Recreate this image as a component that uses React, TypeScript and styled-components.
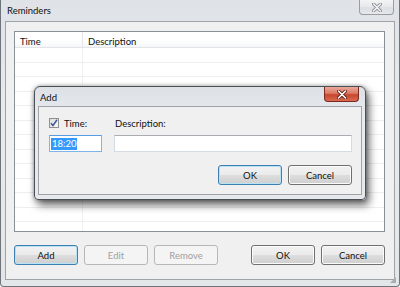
import React from "react";
import styled, { createGlobalStyle, css } from "styled-components";

const Global = createGlobalStyle`
  html, body { margin: 0; padding: 0; background: #ffffff; }
  body { font-family: "Lato", "Liberation Sans", sans-serif; font-size: 9.5px; color: #111111; }
  * { box-sizing: border-box; }
`;

const Window = styled.div`
  position: relative;
  width: 400px;
  height: 287px;
  display: flex;
  flex-direction: column;
  padding: 0 4px 6px 4px;
  border: 1px solid #6f747a;
  border-top: none;
  border-radius: 0 0 4px 4px;
  background: linear-gradient(180deg, #dfe3e8 0%, #e8ebee 40%, #e4e7ea 100%);
`;

const TitleBar = styled.div`
  height: 21px;
  display: flex;
  align-items: flex-start;
  justify-content: space-between;
`;

const TitleText = styled.span`
  padding: 5px 0 0 2px;
  font-size: 9.5px;
  color: #111111;
`;

const CloseBtn = styled.div<{ $red?: boolean }>`
  width: 35px;
  height: 15px;
  margin-right: ${(p) => (p.$red ? "3px" : "1px")};
  border: 1px solid ${(p) => (p.$red ? "#7a2a20" : "#9a9da2")};
  border-top: none;
  border-radius: 0 0 4px 4px;
  display: flex;
  align-items: center;
  justify-content: center;
  ${(p) =>
    p.$red
      ? css`
          background: linear-gradient(180deg, #e9a999 0%, #dc7a64 45%, #c9452f 55%, #d96a50 100%);
        `
      : css`
          background: linear-gradient(180deg, #f1f3f5 0%, #e8eaed 45%, #dcdfe3 55%, #e6e8eb 100%);
        `}
`;

const CloseGlyph = ({ red }: { red?: boolean }) => (
  <svg width="10" height="9" viewBox="0 0 10 9">
    <path
      d="M1.5 1 L8.5 8 M8.5 1 L1.5 8"
      stroke={red ? "#5a2018" : "#8a8d91"}
      strokeWidth="3.2"
      strokeLinecap="round"
    />
    <path
      d="M1.5 1 L8.5 8 M8.5 1 L1.5 8"
      stroke={red ? "#ffffff" : "#f4f5f6"}
      strokeWidth="1.6"
      strokeLinecap="round"
    />
  </svg>
);

const Client = styled.div`
  flex: 1;
  display: flex;
  flex-direction: column;
  border: 1px solid #9ea3a8;
  background: #f0f0f0;
  padding: 9px 9px 14px 8px;
`;

const ListBox = styled.div`
  height: 201px;
  border: 1px solid #8a9098;
  background: #ffffff;
  display: flex;
  flex-direction: column;
  overflow: hidden;
`;

const HeaderRow = styled.div`
  height: 18px;
  display: grid;
  grid-template-columns: 68px 1fr;
  border-bottom: 1px solid #e2e4e7;
  background: linear-gradient(180deg, #ffffff 0%, #ffffff 55%, #f5f6f7 100%);
`;

const HeaderCell = styled.div`
  padding: 4px 0 0 5px;
  border-right: 1px solid #e4e6e9;
  &:last-child { border-right: none; }
`;

const Row = styled.div`
  height: 14.5px;
  flex: none;
  display: grid;
  grid-template-columns: 68px 1fr;
  border-bottom: 1px solid #eeeeee;
`;

const Cell = styled.div`
  border-right: 1px solid #f0f0f0;
  &:last-child { border-right: none; }
`;

const ButtonBar = styled.div`
  margin-top: 13px;
  display: flex;
  align-items: center;
`;

const Spacer = styled.div`
  flex: 1;
`;

const Button = styled.button<{ $default?: boolean }>`
  width: 64px;
  height: 20px;
  margin-left: 6px;
  padding: 0;
  font-family: inherit;
  font-size: 9.5px;
  color: #111111;
  border-radius: 3px;
  border: 1px solid ${(p) => (p.$default ? "#3c7fb1" : "#707070")};
  box-shadow: inset 0 0 0 1px ${(p) => (p.$default ? "#b8e2f6" : "#fbfbfb")};
  background: linear-gradient(180deg, #f2f2f2 0%, #ebebeb 48%, #dddddd 52%, #cfcfcf 100%);
  &:first-child { margin-left: 0; }
  &:disabled {
    color: #a0a0a0;
    border-color: #b5b8bb;
    box-shadow: none;
    background: #f4f4f4;
  }
`;

const Grip = styled.div`
  position: absolute;
  right: 3px;
  bottom: 3px;
  width: 6px;
  height: 6px;
  background-image: radial-gradient(circle, #a9acb0 0.8px, transparent 1px);
  background-size: 2px 2px;
  clip-path: polygon(100% 0, 100% 100%, 0 100%);
`;

/* Add dialog */
const Dialog = styled.div`
  position: absolute;
  left: 33px;
  top: 86px;
  width: 332px;
  height: 114px;
  display: flex;
  flex-direction: column;
  padding: 0 3px 4px 3px;
  border: 1px solid #4b5057;
  border-radius: 6px 6px 4px 4px;
  background: linear-gradient(180deg, #dde1e6 0%, #e9ecef 30%, #e6e9ec 100%);
  box-shadow: 3px 5px 8px rgba(0, 0, 0, 0.6), 0 0 4px rgba(0, 0, 0, 0.35);
`;

const DialogTitleBar = styled.div`
  height: 21px;
  display: flex;
  align-items: flex-start;
  justify-content: space-between;
`;

const DialogClient = styled.div`
  flex: 1;
  border: 1px solid #9ea3a8;
  background: #f0f0f0;
  padding: 11px 9px 9px 10px;
  display: flex;
  flex-direction: column;
`;

const FieldGrid = styled.div`
  display: grid;
  grid-template-columns: 53px 1fr;
  column-gap: 12px;
  row-gap: 7px;
`;

const LabelRow = styled.label`
  display: flex;
  align-items: center;
  gap: 5px;
  height: 10px;
`;

const PlainLabel = styled.span`
  display: flex;
  align-items: center;
  height: 10px;
  padding-left: 1px;
`;

const CheckBox = styled.span`
  width: 10px;
  height: 10px;
  border: 1px solid #8e8f8f;
  background: linear-gradient(135deg, #dcdcdc 0%, #f8f8f8 100%);
  display: inline-flex;
  align-items: center;
  justify-content: center;
`;

const TextBox = styled.div<{ $focus?: boolean }>`
  height: 17px;
  border: 1px solid ${(p) => (p.$focus ? "#7eb4ea" : "#d5dbe2")};
  border-top-color: ${(p) => (p.$focus ? "#569de5" : "#abadb3")};
  background: #ffffff;
  padding: 2px 1px;
  display: flex;
  align-items: center;
`;

const Selected = styled.span`
  background: #3399ff;
  color: #ffffff;
  padding: 0 1px;
  line-height: 12px;
`;

const DialogButtons = styled.div`
  margin-top: 13px;
  display: flex;
  justify-content: flex-end;
`;

export default function App() {
  const rows = Array.from({ length: 13 });
  return (
    <>
      <Global />
      <Window>
        <TitleBar>
          <TitleText>Reminders</TitleText>
          <CloseBtn>
            <CloseGlyph />
          </CloseBtn>
        </TitleBar>
        <Client>
          <ListBox>
            <HeaderRow>
              <HeaderCell>Time</HeaderCell>
              <HeaderCell>Description</HeaderCell>
            </HeaderRow>
            {rows.map((_, i) => (
              <Row key={i}>
                <Cell />
                <Cell />
              </Row>
            ))}
          </ListBox>
          <ButtonBar>
            <Button $default>Add</Button>
            <Button disabled>Edit</Button>
            <Button disabled>Remove</Button>
            <Spacer />
            <Button>OK</Button>
            <Button>Cancel</Button>
          </ButtonBar>
        </Client>
        <Grip />

        <Dialog>
          <DialogTitleBar>
            <TitleText>Add</TitleText>
            <CloseBtn $red>
              <CloseGlyph red />
            </CloseBtn>
          </DialogTitleBar>
          <DialogClient>
            <FieldGrid>
              <LabelRow>
                <CheckBox>
                  <svg width="8" height="8" viewBox="0 0 8 8">
                    <path d="M1 4.2 L3 6.5 L7 0.8" fill="none" stroke="#3d5a98" strokeWidth="1.5" />
                  </svg>
                </CheckBox>
                Time:
              </LabelRow>
              <PlainLabel>Description:</PlainLabel>
              <TextBox $focus>
                <Selected>18:20</Selected>
              </TextBox>
              <TextBox />
            </FieldGrid>
            <DialogButtons>
              <Button $default>OK</Button>
              <Button>Cancel</Button>
            </DialogButtons>
          </DialogClient>
        </Dialog>
      </Window>
    </>
  );
}
